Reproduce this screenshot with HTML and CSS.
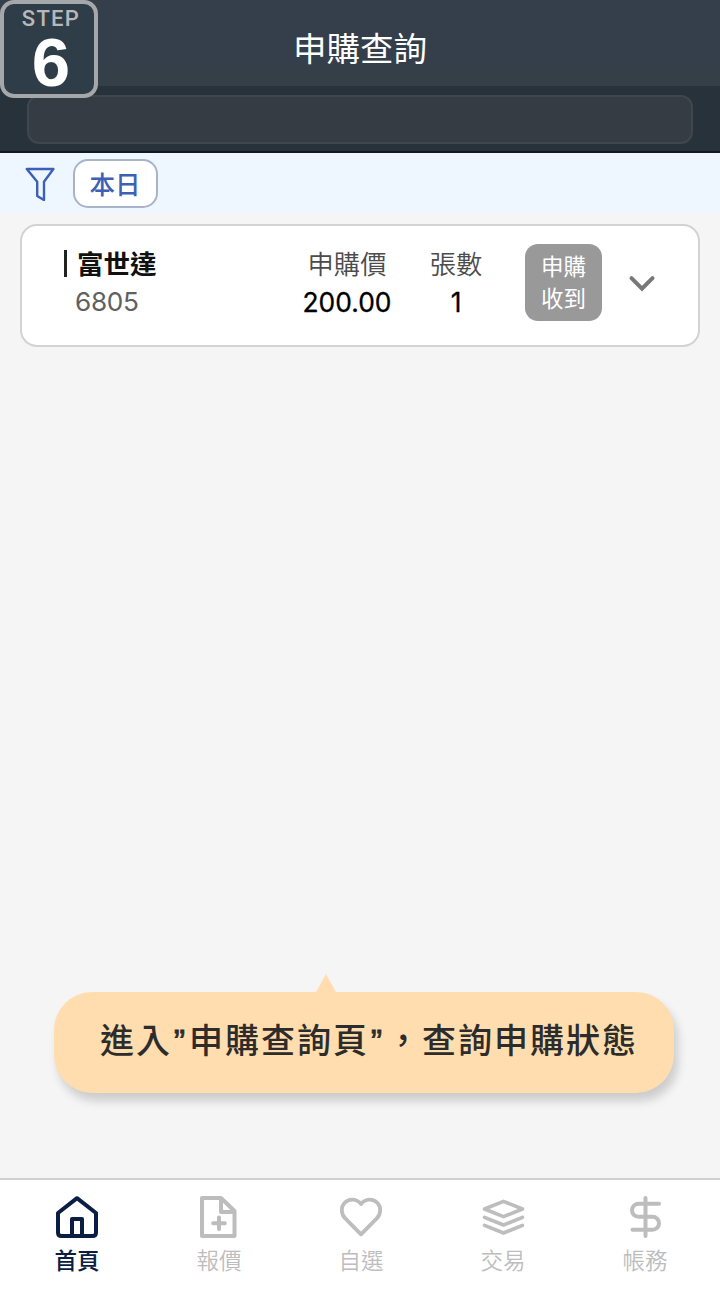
FILE: index.html
```html
<!DOCTYPE html>
<html lang="zh-Hant">
<head>
<meta charset="utf-8">
<title>申購查詢</title>
<link rel="stylesheet" href="styles.css">
</head>
<body>
<div class="app">
  <header class="header"><h1 class="title">申購查詢</h1></header>
  <div class="search"><div class="search-box"></div></div>
  <div class="filters">
    <svg class="funnel" width="30" height="34" viewBox="0 0 30 34"><path d="M1.800 2H28.400L19 14.800V33L12.200 29V14.800Z" fill="none" stroke="#3d5fb8" stroke-width="2.400" stroke-linejoin="round"/></svg>
    <button class="chip">本日</button>
  </div>
  <main class="content">
    <section class="card">
      <div class="stock">
        <div class="name"><i class="mark"></i>富世達</div>
        <div class="code">6805</div>
      </div>
      <div class="field price"><div class="label">申購價</div><div class="value">200.00</div></div>
      <div class="field count"><div class="label">張數</div><div class="value">1</div></div>
      <div class="status"><span>申購</span><span>收到</span></div>
      <svg class="chevron" width="28" height="18" viewBox="0 0 28 18"><path d="M3.500 3.200L14 13.600L24.500 3.200" fill="none" stroke="#777" stroke-width="4" stroke-linecap="round" stroke-linejoin="miter"/></svg>
    </section>
    <div class="tip">
      <svg class="tip-arrow" width="24" height="20" viewBox="0 0 24 20"><path d="M12 0L23 20H1Z" fill="#ffddae"/></svg>
      <p class="tip-text">進入<span class="quote">”</span>申購查詢頁<span class="quote">”</span>，查詢申購狀態</p>
    </div>
  </main>
  <nav class="nav">
    <a class="tab active">
      <svg class="icon" width="44" height="44" viewBox="0 0 44 44" fill="none" stroke="currentColor" stroke-width="4" stroke-linejoin="round" stroke-linecap="round"><path d="M3 18L22 3.200L41 18V37.500Q41 41 37.500 41H6.500Q3 41 3 37.500Z"/><path d="M17 40V24H27V40" stroke-linecap="butt"/></svg>
      <span>首頁</span>
    </a>
    <a class="tab">
      <svg class="icon" width="44" height="44" viewBox="1 0 44 44" fill="none" stroke="currentColor" stroke-width="4" stroke-linejoin="round" stroke-linecap="round"><path d="M6 3H25L38.500 16V41H6Z"/><path d="M25 4V17H37"/><path d="M23 22.500V34M17.200 28.200H28.800"/></svg>
      <span>報價</span>
    </a>
    <a class="tab">
      <svg class="icon" width="44" height="44" viewBox="0 0 44 44" fill="none" stroke="currentColor" stroke-width="3.800" stroke-linejoin="round"><path d="M22 39.300L6.200 23.300C2 19 1.600 12 5.500 8C10 3.300 17.500 3.500 22 9C26.500 3.500 34 3.300 38.500 8C42.400 12 42 19 37.800 23.300Z"/></svg>
      <span>自選</span>
    </a>
    <a class="tab">
      <svg class="icon" width="44" height="44" viewBox="0 0 44 44" fill="none" stroke="currentColor" stroke-width="3.600" stroke-linejoin="round" stroke-linecap="round"><path d="M22.500 6.300L41.500 14L22.500 21.700L3.500 14Z"/><path d="M3.500 22.400L22.500 30L41.500 22.400M3.500 30.400L22.500 38L41.500 30.400"/></svg>
      <span>交易</span>
    </a>
    <a class="tab">
      <svg class="icon" width="44" height="44" viewBox="0 0 44 44" fill="none" stroke="currentColor" stroke-width="4" stroke-linejoin="round" stroke-linecap="round"><path d="M22.500 3V41M36 8.700H15.500A6.500 6.500 0 0 0 15.500 21.700H29.500A6.500 6.500 0 0 1 29.500 34.700H9.500"/></svg>
      <span>帳務</span>
    </a>
  </nav>
  <div class="step"><span class="step-label">STEP</span><span class="step-number">6</span></div>
</div>
</body>
</html>
```
FILE: styles.css
```css
* { box-sizing: border-box; }
body { margin: 0; font-family: "Noto Sans CJK TC", sans-serif; background: #f5f5f5; }
.app { position: relative; width: 720px; height: 1300px; display: flex; flex-direction: column; background: #f5f5f5; overflow: hidden; }
.header { height: 86px; padding: 22px 0 0; background: linear-gradient(#343f4b 70%, #353f46); }
.title { margin: 0; text-align: center; font-size: 33.5px; line-height: 50px; font-weight: 400; color: #fff; }
.search { height: 67px; padding: 9px 27px 0; background: linear-gradient(#27323a, #29323b); border-bottom: 2px solid #101a24; }
.search-box { height: 49px; border: 2px solid #3e464e; border-radius: 12px; background: #363c43; }
.filters { height: 64px; display: flex; gap: 18px; padding: 6px 0 0 25px; background: linear-gradient(#eef6ff 85%, #f5f5f7); }
.funnel { margin-top: 8px; }
.chip { width: 85px; height: 49px; padding: 0 1px 2px 0; border: 2px solid #a9b3c9; border-radius: 15px; background: #fff; color: #3e60b4; font: 500 25.500px/43px "Noto Sans CJK TC", sans-serif; }
.content { flex: 1; display: flex; flex-direction: column; justify-content: space-between; padding: 7px 20px 85px; }
.card { height: 123px; display: flex; border: 2px solid #d3d3d3; border-radius: 17px; background: #fff; padding-left: 40px; }
.stock { width: 230px; padding-top: 17px; }
.name { display: flex; align-items: center; height: 40px; font-size: 26.500px; line-height: 40px; font-weight: 700; color: #111; }
.mark { width: 3px; height: 27px; margin: 0 10px 0 2px; background: #222; }
.code { padding-left: 13px; font: 400 26.200px/38px Inter, sans-serif; color: #606060; letter-spacing: -.3px; }
.field { padding-top: 17px; text-align: center; }
.price { width: 110px; }
.count { width: 108px; }
.label { font-size: 26.300px; line-height: 40px; font-weight: 350; color: #4c4c4c; }
.value { font: 400 26.400px/38px Inter, sans-serif; color: #000; -webkit-text-stroke: .3px #000; }
.status { width: 77px; height: 77px; margin: 18px 0 0 15px; padding-top: 5px; border-radius: 13px; background: #999; display: flex; flex-direction: column; align-items: center; color: #fff; font-size: 22.500px; line-height: 32px; }
.chevron { margin: 49px 0 0 26px; }
.tip { position: relative; width: 620px; height: 101px; margin-left: 34px; border-radius: 38px; background: #ffddae; box-shadow: 4px 8px 10px rgba(0,0,0,.17); }
.tip-arrow { position: absolute; left: 260px; top: -18px; }
.tip-text { margin: 0; padding-left: 46px; font-size: 34px; line-height: 94px; letter-spacing: 2px; font-weight: 500; color: #2c2c2c; white-space: nowrap; }
.quote { display: inline-block; width: 17px; text-align: center; font-family: "Liberation Sans", sans-serif; line-height: 40px; -webkit-text-stroke: .8px #2c2c2c; }
.nav { height: 122px; display: flex; padding: 15px 4px 0 6px; border-top: 2px solid #d0d0d0; background: #fff; }
.tab { flex: 1; display: flex; flex-direction: column; align-items: center; color: #bdbdbd; font-size: 22.500px; line-height: 34px; font-weight: 350; }
.icon { margin-bottom: 3px; }
.active { color: #0a1e43; font-weight: 500; }
.step { position: absolute; left: 0; top: 0; width: 98px; height: 98px; padding: 4px 0 0 4px; border: 4px solid #a5a8ab; border-radius: 14px; background: #2f3d49; display: flex; flex-direction: column; align-items: center; }
.step-label { font: 500 22px/22px Roboto, sans-serif; letter-spacing: 1.300px; color: #b8b8b8; }
.step-number { font: 700 69px/65px "Liberation Sans", sans-serif; color: #fff; }
```
